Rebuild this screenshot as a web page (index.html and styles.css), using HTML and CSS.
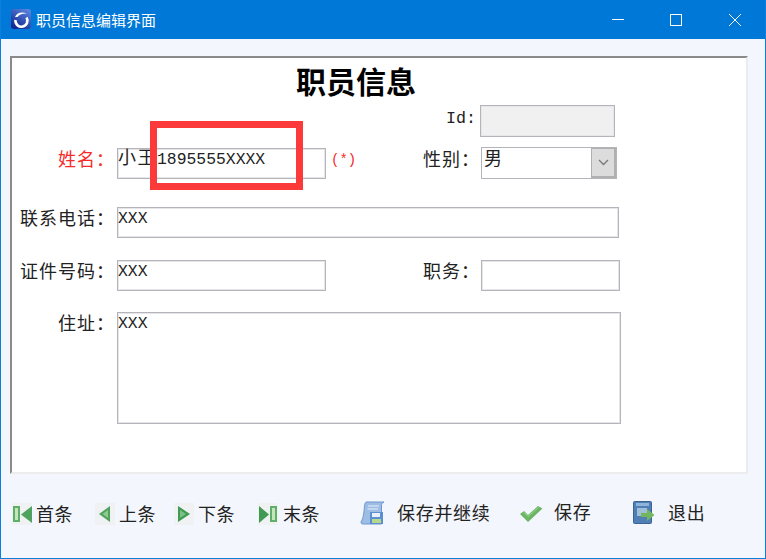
FILE: index.html
```html
<!DOCTYPE html>
<html lang="zh-CN">
<head>
  <meta charset="UTF-8">
  <meta name="viewport" content="width=device-width, initial-scale=1.0">
  <title>职员信息编辑界面</title>
  <link rel="stylesheet" href="styles.css">
</head>
<body>
  <div class="window">
    <!-- Title bar -->
    <div class="titlebar">
      <svg class="app-icon" width="20" height="20" viewBox="0 0 20 20">
        <defs>
          <linearGradient id="appBg" x1="0.8" y1="0" x2="0.2" y2="1">
            <stop offset="0" stop-color="#5a84dc"/>
            <stop offset="1" stop-color="#0d2390"/>
          </linearGradient>
        </defs>
        <rect width="20" height="20" rx="3" fill="url(#appBg)"/>
        <path d="M15.500 8.500A6 6 0 1 1 4.500 11" stroke="#fff" stroke-width="2.600" fill="none"/>
        <path d="M4 8C6 3.500 11 2.500 16 4.500C11.500 4 8.500 5.500 6.500 8Z" fill="#fff"/>
      </svg>
      <span class="title-text">职员信息编辑界面</span>
      <div class="controls">
        <svg width="14" height="14" viewBox="0 0 14 14"><path d="M0 7.500H12" stroke="#fff" fill="none"/></svg>
        <svg width="14" height="14" viewBox="0 0 14 14"><rect x="0.500" y="2.500" width="11" height="11" stroke="#fff" fill="none"/></svg>
        <svg width="14" height="14" viewBox="0 0 14 14"><path d="M1 2L13 14M13 2L1 14" stroke="#fff" fill="none"/></svg>
      </div>
    </div>

    <div class="content">
      <!-- Form panel -->
      <div class="panel">
        <h1>职员信息</h1>
        <div class="form-grid">
          <div class="label label-latin col-right row-id">Id:</div>
          <div class="field field-disabled col-last row-id"></div>

          <div class="label label-red row-name">姓名：</div>
          <div class="field row-name"><span class="cn">小王</span>1895555XXXX</div>
          <div class="right-cell row-name">
            <span class="required">(*)</span>
            <span class="label label-right">性别：</span>
          </div>
          <div class="combo row-name">
            <span class="cn combo-value">男</span>
            <span class="combo-arrow">
              <svg width="11" height="7" viewBox="0 0 11 7"><path d="M1 1L5.500 5.500L10 1" stroke="#77777c" stroke-width="1.300" fill="none"/></svg>
            </span>
          </div>

          <div class="label row-phone">联系电话：</div>
          <div class="field field-wide row-phone">XXX</div>

          <div class="label row-card">证件号码：</div>
          <div class="field row-card">XXX</div>
          <div class="label label-right col-right row-card">职务：</div>
          <div class="field field-job row-card"></div>

          <div class="label row-addr">住址：</div>
          <div class="field field-addr row-addr">XXX</div>
        </div>
      </div>

      <!-- Bottom buttons -->
      <div class="toolbar">
        <div class="tool">
          <svg class="nav-icon" width="20" height="22" viewBox="0 0 20 22"><rect width="20" height="22" fill="#eff1f3"/><rect x="1" y="3" width="7" height="16" fill="#5fae6c"/><rect x="3" y="5" width="3" height="12" fill="#c4e6b8"/><path d="M20 3V20L9 11.500Z" fill="#4fa35f"/></svg>
          <span>首条</span>
        </div>
        <div class="tool">
          <svg class="nav-icon" width="20" height="22" viewBox="0 0 20 22"><rect width="20" height="22" fill="#eff1f3"/><path d="M15 3V19L4 11Z" fill="#4fa35f"/><path d="M13 7V15L7.500 11Z" fill="#8fcb90"/></svg>
          <span>上条</span>
        </div>
        <div class="tool">
          <svg class="nav-icon" width="20" height="22" viewBox="0 0 20 22"><rect width="20" height="22" fill="#eff1f3"/><path d="M4 3V19L16 11Z" fill="#3f9a52"/><path d="M6 7V15L12 11Z" fill="#7cc184"/></svg>
          <span>下条</span>
        </div>
        <div class="tool tool-last">
          <svg class="nav-icon" width="20" height="22" viewBox="0 0 20 22"><rect width="20" height="22" fill="#eff1f3"/><path d="M1 3V20L11 11.500Z" fill="#3f9a52"/><rect x="12" y="3" width="7" height="16" fill="#5fae6c"/><rect x="14" y="5" width="3" height="12" fill="#c4e6b8"/></svg>
          <span>末条</span>
        </div>
        <div class="tool tool-action">
          <svg width="25" height="24" viewBox="0 0 25 24"><path d="M6 1H24C22 2 21.500 3 21.500 5V23H3C1 23 0.500 21.500 1.500 20C3 18 4 12 4.500 5C4.700 3 5 2 6 1Z" fill="#9dbde4" stroke="#6f97cf"/><rect x="10" y="11" width="13" height="12" fill="#5b8fcf"/><rect x="12" y="12" width="8" height="4" fill="#e8f0fa"/><rect x="12" y="18" width="9" height="4" fill="#b5d98c"/><path d="M8 5H19M7.500 8H18" stroke="#e8f0fa"/></svg>
          <span>保存并继续</span>
        </div>
        <div class="tool tool-action tool-check">
          <svg width="24" height="18" viewBox="0 0 24 18"><path d="M1 9L5 6L9 10L19 1L23.500 3.500L9 17Z" fill="#6cb565"/><path d="M5 7.500L9 11.500L19.500 2.500" stroke="#9ad68e" fill="none"/></svg>
          <span>保存</span>
        </div>
        <div class="tool tool-action tool-exit">
          <svg width="22" height="24" viewBox="0 0 22 24"><rect x="0.500" y="0.500" width="18" height="22" rx="1" fill="#4f7fb5" stroke="#3a6396"/><rect x="3" y="2" width="13" height="3" fill="#8fb4dc"/><rect x="4" y="7" width="10" height="8" fill="#9fbfd8"/><path d="M8 12H14V8L21.500 14L14 20V16H8Z" fill="#72b65f"/></svg>
          <span>退出</span>
        </div>
      </div>
    </div>

    <!-- Red annotation box -->
    <div class="mark"></div>
  </div>
</body>
</html>
```

FILE: styles.css
```css
/* Window */
html,
body {
  margin: 0;
  padding: 0;
}

.window {
  position: relative;
  box-sizing: border-box;
  width: 766px;
  height: 559px;
  border: 1px solid #0a7fdc;
  border-top: none;
  background-color: #f3f6fc;
  color: #222;
  font-family: "Noto Sans CJK SC", sans-serif;
  overflow: hidden;
}

.titlebar {
  display: flex;
  align-items: center;
  box-sizing: border-box;
  height: 39px;
  padding-bottom: 1px;
  background-color: #0078d7;
  color: #fff;
}

.app-icon {
  margin-left: 10px;
}

.title-text {
  margin-left: 5px;
  font-size: 15px;
}

.controls {
  display: flex;
  gap: 44px;
  margin-left: auto;
  margin-right: 23px;
}

.content {
  padding: 17px 9px 0;
}

/* Form panel */
.panel {
  box-sizing: border-box;
  width: 738px;
  height: 418px;
  background-color: #fff;
  border-style: solid;
  border-width: 2px;
  border-color: #8a8a8a #ececec #ececec #8a8a8a;
}

h1 {
  height: 47px;
  margin: 0;
  padding-left: 284px;
  font-size: 30px;
  line-height: 44px;
  font-weight: bold;
  color: #000;
}

.form-grid {
  display: grid;
  grid-template-columns: 105px 209px 155px 140px;
  grid-template-rows: 32px 42px 59px 53px 133px;
}

.row-id { grid-row: 1; }
.row-name { grid-row: 2; margin-top: 11px; }
.row-phone { grid-row: 3; margin-top: 28px; }
.row-card { grid-row: 4; margin-top: 22px; }
.row-addr { grid-row: 5; margin-top: 21px; }

.col-right { grid-column: 3; }
.col-last { grid-column: 4; margin-left: -1px; }

.label {
  margin-right: 2px;
  font-size: 18px;
  line-height: 20px;
  letter-spacing: 1px;
  text-align: right;
  white-space: nowrap;
}

.label-right {
  margin-right: 1px;
}

.label-red {
  color: #f52a2a;
}

.label-latin {
  margin-right: 0;
  padding-top: 4px;
  padding-right: 5px;
  font-family: "Liberation Mono", monospace;
  font-size: 16.67px;
  letter-spacing: 0;
}

.field {
  box-sizing: border-box;
  height: 31px;
  padding-top: 1px;
  border: 1px solid #b4b4ba;
  box-shadow: inset 0 0 0 1px #e6e6ea;
  background-color: #fff;
  font-family: "Liberation Mono", monospace;
  font-size: 16.4px;
  line-height: 20px;
  color: #222;
  white-space: nowrap;
}

.cn {
  font-family: "Noto Sans CJK SC", sans-serif;
  font-size: 18px;
  line-height: 0;
  letter-spacing: 1.500px;
}

.field-disabled {
  width: 135px;
  height: 32px;
  background-color: #f0f0f0;
}

.field-wide {
  grid-column: 2 / 5;
  width: 502px;
}

.field-job {
  grid-column: 4;
  width: 139px;
}

.field-addr {
  grid-column: 2 / 5;
  width: 504px;
  height: 112px;
}

.right-cell {
  display: flex;
  justify-content: space-between;
  padding-left: 5px;
}

.required {
  margin-top: 2px;
  font-family: "Liberation Mono", monospace;
  font-size: 14px;
  line-height: 20px;
  color: #f52a2a;
}

.combo {
  display: flex;
  box-sizing: border-box;
  width: 136px;
  height: 32px;
  margin-top: 10px;
  border: 1px solid #b4b4ba;
  background-color: #fff;
}

.combo-value {
  flex: 1;
  padding-left: 2px;
  line-height: 19px;
}

.combo-arrow {
  display: flex;
  align-items: center;
  justify-content: center;
  box-sizing: border-box;
  width: 25px;
  background-color: #dcdcdc;
  border: 1px solid #b0b0b0;
  border-width: 1px 2px 2px 1px;
}

/* Bottom buttons */
.toolbar {
  display: grid;
  grid-template-columns: 83px 79px 84px 102px 159px 114px auto;
  margin-top: 26px;
  padding-left: 2px;
}

.tool {
  display: flex;
  align-items: center;
  gap: 4px;
  height: 26px;
  font-size: 18px;
  letter-spacing: 0.5px;
  white-space: nowrap;
}

.nav-icon {
  margin-top: 2px;
}

.tool-last {
  gap: 5px;
}

.tool-action {
  gap: 12px;
  letter-spacing: 0.700px;
}

.tool-action span {
  margin-top: -2px;
}

.tool-check {
  gap: 11px;
}

.tool-check svg {
  margin-top: 2px;
}

.tool-check span {
  margin-top: -4px;
}

.tool-exit {
  gap: 13px;
}

/* Red annotation over the name field */
.mark {
  position: absolute;
  left: 149px;
  top: 121px;
  box-sizing: border-box;
  width: 153px;
  height: 69px;
  border: 7px solid #fd3a3a;
}
```
